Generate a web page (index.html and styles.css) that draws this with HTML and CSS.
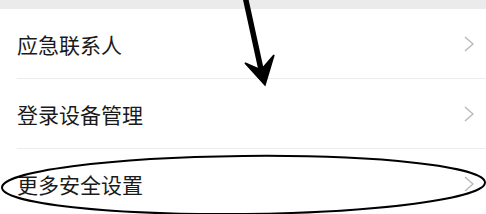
FILE: index.html
```
<!DOCTYPE html>
<html lang="zh-CN">

<head>
    <meta charset="UTF-8">
    <title>账号与安全</title>

    <link rel="stylesheet" href="styles.css">
</head>

<body>

    <div class="skille"></div>

    <section class="menu">
        <a class="punkt" href="#">
            <span class="tekst">应急联系人</span>
            <svg class="pil" viewBox="0 0 10 16"><polyline points="1,1 9,8 1,15" /></svg>
        </a>
        <a class="punkt" href="#">
            <span class="tekst">登录设备管理</span>
            <svg class="pil" viewBox="0 0 10 16"><polyline points="1,1 9,8 1,15" /></svg>
        </a>
        <a class="punkt" href="#">
            <span class="tekst">更多安全设置</span>
            <svg class="pil" viewBox="0 0 10 16"><polyline points="1,1 9,8 1,15" /></svg>
        </a>
    </section>

    <!-- markering tegnet oven på skærmbilledet -->
    <svg class="markering" viewBox="0 0 486 214">
        <path class="streg" d="M245 -4 L262 74" />
        <path class="spids" d="M265 85 L245 63 L261 70 L274 55 Z" />
        <ellipse class="ring" cx="243.5" cy="185" rx="241.5" ry="29" transform="rotate(-0.6 243 185)" />
    </svg>

</body>

</html>
```

FILE: styles.css
```
body {
    margin: 0;
    width: 486px;
    height: 214px;
    overflow: hidden;
    position: relative;
    background: white;
    font-family: "Noto Sans CJK SC", "Noto Sans", sans-serif;
}

.skille {
    height: 9px;
    background-color: #ebebeb;
}

.menu {
    display: flex;
    flex-direction: column;
}

.punkt {
    height: 70px;
    margin-left: 17px;
    padding-right: 12px;
    display: flex;
    align-items: center;
    justify-content: space-between;
    border-bottom: 1px solid #ececec;
    text-decoration: none;
    box-sizing: border-box;
}

.punkt:last-child {
    border-bottom: none;
}

.tekst {
    font-size: 21px;
    color: #1a1a1a;
}

.pil {
    width: 10px;
    height: 16px;
    fill: none;
    stroke: #b8b8b8;
    stroke-width: 1.4;
}

.markering {
    position: absolute;
    top: 0;
    left: 0;
    width: 486px;
    height: 214px;
    pointer-events: none;
}

.streg {
    stroke: black;
    stroke-width: 5.5;
    fill: none;
}

.spids {
    fill: black;
    stroke: black;
    stroke-width: 1.5;
    stroke-linejoin: miter;
}

.ring {
    stroke: black;
    stroke-width: 2;
    fill: none;
}
```
